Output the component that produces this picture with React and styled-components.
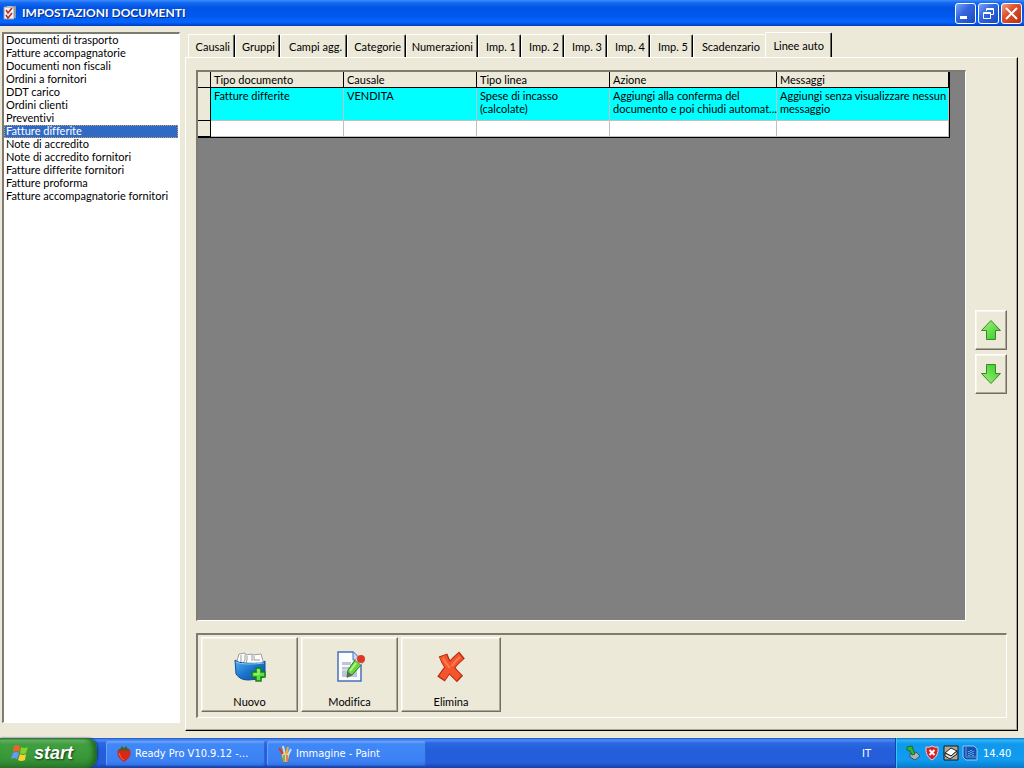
import { useState } from "react";
import styled, { createGlobalStyle, css } from "styled-components";

const documentTypes = [
  "Documenti di trasporto",
  "Fatture accompagnatorie",
  "Documenti non fiscali",
  "Ordini a fornitori",
  "DDT carico",
  "Ordini clienti",
  "Preventivi",
  "Fatture differite",
  "Note di accredito",
  "Note di accredito fornitori",
  "Fatture differite fornitori",
  "Fatture proforma",
  "Fatture accompagnatorie fornitori",
];

const tabs = [
  { label: "Causali", width: 47 },
  { label: "Gruppi", width: 45 },
  { label: "Campi agg.", width: 67 },
  { label: "Categorie", width: 59 },
  { label: "Numerazioni", width: 72 },
  { label: "Imp. 1", width: 43 },
  { label: "Imp. 2", width: 43 },
  { label: "Imp. 3", width: 43 },
  { label: "Imp. 4", width: 43 },
  { label: "Imp. 5", width: 43 },
  { label: "Scadenzario", width: 72 },
  { label: "Linee auto", width: 67 },
];

const columns = [
  { title: "Tipo documento", width: 133 },
  { title: "Causale", width: 133 },
  { title: "Tipo linea", width: 133 },
  { title: "Azione", width: 167 },
  { title: "Messaggi", width: 172 },
];

const rows = [
  [
    "Fatture differite",
    "VENDITA",
    "Spese di incasso\n(calcolate)",
    "Aggiungi alla conferma del\ndocumento e poi chiudi automat...",
    "Aggiungi senza visualizzare nessun\nmessaggio",
  ],
];

const GlobalStyle = createGlobalStyle`
  * {
    box-sizing: border-box;
  }
  body {
    margin: 0;
    background: #ece9d8;
    font-family: Lato, "Liberation Sans", Arial, sans-serif;
    font-size: 11px;
    font-variant-ligatures: none;
    line-height: 13px;
    color: #000;
  }
  button {
    font: inherit;
    font-variant-ligatures: none;
    color: inherit;
    padding: 0;
    margin: 0;
  }
  svg {
    display: block;
    flex: none;
  }
`;

const sunken = css`
  border: solid;
  border-width: 2px 1px 1px 2px;
  border-color: #7e7c70 #fff #fff #7e7c70;
`;

const raised = css`
  background: #ece9d8;
  border: 1px solid;
  border-color: #fff #716f64 #716f64 #fff;
  box-shadow: inset -1px -1px #aca899, inset 1px 1px #f8f6ec;
`;

const Desktop = styled.div`
  display: flex;
  flex-direction: column;
  min-height: 100vh;
`;

const TitleBar = styled.header`
  display: flex;
  align-items: center;
  gap: 5px;
  height: 26px;
  padding: 0 2px 0 3px;
  background: linear-gradient(#3a8cff 0, #1468f0 3px, #0054e3 8px, #0058ee 16px, #0566ff 22px, #0048d0 25px, #0038b8 26px);
`;

const Title = styled.h1`
  flex: 1;
  margin: 0;
  font-size: 12px;
  font-weight: bold;
  line-height: 16px;
  color: #fff;
  text-shadow: 1px 1px #0a2a80;
`;

const WindowButtons = styled.div`
  display: flex;
  gap: 2px;
`;

const WindowButton = styled.button`
  display: grid;
  place-items: center;
  width: 21px;
  height: 21px;
  border: 1px solid #fff;
  border-radius: 3px;
  background: ${(props) =>
    props.$close
      ? "linear-gradient(135deg, #f0a088, #e0502c 40%, #b83010)"
      : "linear-gradient(135deg, #7ca4f4, #3468e0 40%, #1848c0)"};
`;

const Main = styled.main`
  flex: 1;
  display: flex;
  gap: 5px;
  padding: 6px 6px 7px 2px;
`;

const DocumentList = styled.ul`
  ${sunken}
  flex: none;
  width: 178px;
  margin: 0 0 8px;
  padding: 0 1px 0 0;
  list-style: none;
  background: #fff;
`;

const DocumentItem = styled.li`
  height: 13px;
  padding: 0 2px;
  line-height: 11px;
  white-space: nowrap;
  cursor: default;
  ${(props) =>
    props.$selected &&
    css`
      background: #316ac5;
      color: #fff;
      outline: 1px dotted #c8a060;
      outline-offset: -1px;
    `}
`;

const Settings = styled.section`
  flex: 1;
  min-width: 0;
  display: flex;
  flex-direction: column;
`;

const TabStrip = styled.div`
  display: flex;
  align-items: flex-end;
  height: 25px;
  padding-left: 3px;
`;

const Tab = styled.button`
  width: ${(props) => props.$width}px;
  height: 23px;
  border: solid;
  border-width: 1px 1px 0 1px;
  border-color: #fff #000 #fff #fff;
  border-radius: 2px 2px 0 0;
  background: #ece9d8;
  box-shadow: inset -1px 0 #716f64;
  padding: 1px 4px 0 0;
  text-align: right;
  white-space: nowrap;
  ${(props) =>
    props.$beforeActive &&
    css`
      border-right-color: transparent;
      box-shadow: none;
    `}
  ${(props) =>
    props.$active &&
    css`
      height: 26px;
      margin-bottom: -1px;
      padding: 0 7px 1px 0;
    `}
`;

const TabPanel = styled.div`
  flex: 1;
  display: flex;
  flex-direction: column;
  gap: 12px;
  padding: 12px 10px 12px 10px;
  border: 1px solid;
  border-color: #fff #000 #000 #fff;
  box-shadow: inset -1px -1px #aca899;
`;

const GridArea = styled.div`
  flex: 1;
  display: flex;
  gap: 9px;
`;

const GridFrame = styled.div`
  ${sunken}
  flex: 1;
  min-width: 0;
  overflow: hidden;
  background: #808080;
`;

const Grid = styled.table`
  table-layout: fixed;
  width: 752px;
  border-collapse: separate;
  border-spacing: 0;
  border-right: 1px solid #000;
  border-bottom: 1px solid #000;
`;

const HeadCell = styled.th`
  height: 16px;
  padding: 1px 3px 0;
  border-right: 1px solid #000;
  border-bottom: 1px solid #000;
  background: #ece9d8;
  font-weight: normal;
  line-height: 14px;
  text-align: left;
`;

const RowMarker = styled.th`
  padding: 0;
  border-right: 1px solid #000;
  border-bottom: 1px solid #000;
  background: #ece9d8;
`;

const Cell = styled.td`
  height: ${(props) => (props.$filled ? 33 : 16)}px;
  padding: 1px 0 0 3px;
  border-right: 1px solid #c0c0c0;
  border-bottom: 1px solid #c0c0c0;
  background: ${(props) => (props.$filled ? "#0ff" : "#fff")};
  vertical-align: top;
  white-space: pre;
`;

const MoveButtons = styled.div`
  display: flex;
  flex-direction: column;
  justify-content: center;
  gap: 4px;
  padding-top: 12px;
`;

const MoveButton = styled.button`
  ${raised}
  display: grid;
  place-items: center;
  width: 32px;
  height: 40px;
`;

const ActionBar = styled.div`
  ${sunken}
  display: flex;
  gap: 3px;
  height: 85px;
  padding: 2px 3px;
`;

const ActionButton = styled.button`
  ${raised}
  display: flex;
  flex-direction: column;
  align-items: center;
  justify-content: space-between;
  width: ${(props) => (props.$last ? 100 : 97)}px;
  height: 75px;
  padding: 12px 0 3px;
`;

const Taskbar = styled.footer`
  display: flex;
  align-items: stretch;
  height: 30px;
  background: linear-gradient(#1c50c0 0, #4c90f4 2px, #2c68e4 5px, #245edb 12px, #245edb 25px, #1840a8 30px);
  color: #fff;
  font-family: "DejaVu Sans Condensed", "DejaVu Sans", sans-serif;
`;

const StartButton = styled.button`
  display: flex;
  align-items: center;
  gap: 4px;
  width: 97px;
  padding-left: 10px;
  border: 0;
  border-radius: 0 10px 10px 0;
  background: linear-gradient(#2c7a2c 0, #70b870 2px, #40a040 6px, #389838 20px, #2c7c2c 30px);
  box-shadow: inset -4px 0 5px #206820, 1px 0 2px #10389c;
  font-family: "Liberation Sans", Arial, sans-serif;
  font-size: 18px;
  font-weight: bold;
  font-style: italic;
  line-height: 20px;
  text-shadow: 1px 1px 2px #103810;
`;

const Tasks = styled.nav`
  flex: 1;
  display: flex;
  gap: 2px;
  padding: 3px 0 2px 9px;
`;

const Task = styled.button`
  display: flex;
  align-items: center;
  gap: 3px;
  width: 159px;
  padding-left: 10px;
  border: 0;
  border-radius: 3px;
  background: linear-gradient(#70a8ff 0, #4088f8 3px, #3c81f3 20px, #3070e0 25px);
  box-shadow: inset 1px 1px #6ca0f8, inset -1px -1px #2c64d0;
  white-space: nowrap;
`;

const Language = styled.span`
  align-self: center;
  padding: 0 24px;
`;

const Tray = styled.div`
  display: flex;
  align-items: center;
  gap: 3px;
  width: 129px;
  padding-left: 9px;
  border-left: 1px solid #0c48a0;
  background: linear-gradient(#0c6cc0 0, #30b4f8 2px, #1098ec 6px, #109cf0 22px, #0c78c8 30px);
  box-shadow: inset 1px 0 #40c0ff;
`;

const Clock = styled.time`
  margin-left: 2px;
`;

function ChecklistIcon() {
  return (
    <svg width="14" height="16" viewBox="0 0 14 16">
      <path d="M4 1h9v12H4z" fill="#8c98a0" />
      <path d="M1 2h10v12H1z" fill="#f4f4f0" stroke="#90a0a4" />
      <path d="M4 1h5v2H4z" fill="#b8c4c8" />
      <path d="M3 5l2 3 4-5M3 10l2 3 4-5" fill="none" stroke="#c02028" strokeWidth="1.5" />
    </svg>
  );
}

function BoxIcon() {
  return (
    <svg width="34" height="34" viewBox="0 0 34 34">
      <defs>
        <linearGradient id="box" x2="1" y2="1">
          <stop stopColor="#58b0f0" />
          <stop offset=".5" stopColor="#1c74cc" />
          <stop offset="1" stopColor="#0c4ca0" />
        </linearGradient>
      </defs>
      <path d="M4 11l2-7 6-1 1 2 6-1 1 1 8-1 2 7v4H4z" fill="#fff" stroke="#9c9c98" />
      <path d="M8 5v7l-2 1M12 5v5l-2 3M14 6v4l-1 3M19 5v6M21 6v4h6" fill="none" stroke="#999" />
      <path d="M2 10l3 2q8 2 24 1l3-2v15l-5 3-12 1q-8 0-12-6z" fill="url(#box)" stroke="#0c5098" />
      <path d="M3 12q3 2 12 2 9 0 16-1" fill="none" stroke="#80c8f8" />
      <path d="M23 18h5v4h4v5h-4v4h-5v-4h-4v-5h4z" fill="#64e044" stroke="#14801c" strokeWidth="1.5" />
      <path d="M24 20h2v4h-5" fill="none" stroke="#b4ff90" />
    </svg>
  );
}

function EditIcon() {
  return (
    <svg width="34" height="34" viewBox="0 0 34 34">
      <path d="M5 2h15l8 8v21H5z" fill="#fbfdff" stroke="#4870b8" strokeWidth="1.5" />
      <path d="M20 2v8h8" fill="#c8dcf8" stroke="#4870b8" />
      <path d="M9 12h9v3H9zM9 17h15v10H9z" fill="#bcc4d8" />
      <path d="M9 16h14M9 20h14" stroke="#eef2fa" />
      <path d="M22 10l6 5-9 10-5 2 1-7z" fill="#68d83c" stroke="#287818" />
      <path d="M23 13l-6 8" stroke="#b4f48c" strokeWidth="2" />
      <path d="M15 22l4 3-5 3z" fill="#606468" />
      <path d="M22 10l3-4 6 5-3 4z" fill="#dce0e4" stroke="#888" strokeWidth=".5" />
      <circle cx="28" cy="9" r="4" fill="#e03828" />
    </svg>
  );
}

function DeleteIcon() {
  return (
    <svg width="34" height="34" viewBox="0 0 34 34" fill="none">
      <path d="M9 5q4 12 17 24M28 5Q17 14 7 29" stroke="#b82c14" strokeWidth="9" />
      <path d="M9 6q4 11 16 22M27 6Q17 14 8 28" stroke="#f4552c" strokeWidth="7" />
      <path d="M9 8q3 6 7 10M26 7q-5 4-8 9" stroke="#ff7c50" strokeWidth="2" />
    </svg>
  );
}

function ArrowIcon({ down }) {
  return (
    <svg width="22" height="22" viewBox="0 0 22 22">
      <defs>
        <linearGradient id="arrow" x2="1" y2="1">
          <stop stopColor="#a8f480" />
          <stop offset="1" stopColor="#30c820" />
        </linearGradient>
      </defs>
      <path
        d="M11 1.500L20.500 11.500H15.500V20.500H6.500V11.500H1.500z"
        fill="url(#arrow)"
        stroke="#38882c"
        transform={down ? "matrix(1 0 0 -1 0 22)" : undefined}
      />
    </svg>
  );
}

function FlagIcon() {
  return (
    <svg width="20" height="20" viewBox="0 0 20 20">
      <path d="M4 3q3-2 6 0L9 9Q6 7 3 9z" fill="#f06030" />
      <path d="M11 4q3 2 7 0l-2 6q-3 2-6 0z" fill="#88d030" />
      <path d="M3 10q3-2 6 0l-2 6q-3-2-6 0z" fill="#6898f8" />
      <path d="M10 11q3 2 6 0l-1 6q-4 2-7 0z" fill="#fcd030" />
    </svg>
  );
}

function StrawberryIcon() {
  return (
    <svg width="16" height="18" viewBox="0 0 16 18">
      <path d="M2 5q6-3 12 0 2 4-2 9l-4 3-4-3Q0 9 2 5z" fill="#d42818" />
      <path d="M3 8q1 5 5 7" fill="none" stroke="#f06848" />
      <path d="M2 5l3-2 1-2 2 2 3-2v2l3 2-3 1-3-1-3 1z" fill="#4c5c24" />
    </svg>
  );
}

function PaintIcon() {
  return (
    <svg width="16" height="18" viewBox="0 0 16 18">
      <path d="M4 8h9l-2 9H6z" fill="#e4d8a8" stroke="#806840" strokeWidth=".7" />
      <path d="M6 9L2 3" stroke="#d83828" strokeWidth="2" />
      <path d="M8 10L6 1" stroke="#f0d8a0" strokeWidth="2" />
      <path d="M9 10l2-8" stroke="#e8b040" strokeWidth="2" />
      <path d="M11 10l3-6" stroke="#c8e0f0" strokeWidth="2" />
      <path d="M7 10v6" stroke="#50a840" strokeWidth="1.5" />
      <path d="M10 10v6" stroke="#e06040" strokeWidth="1.5" />
    </svg>
  );
}

function TrayIcons() {
  return (
    <>
      <svg width="16" height="16" viewBox="0 0 16 16">
        <path d="M5 9l6-2 4 4-5 4-5-3z" fill="#a8b4b8" stroke="#405058" />
        <path d="M2 2l5-1 1 3 2 5-3 1-2-4-3-1z" fill="#38b038" stroke="#14702c" />
      </svg>
      <svg width="16" height="16" viewBox="0 0 16 16">
        <path d="M8 1q3 2 6 1 1 9-6 13Q1 11 2 2q3 1 6-1z" fill="#d82028" stroke="#e8d0d0" />
        <path d="M5.500 5l5 5M10.500 5l-5 5" stroke="#fff" strokeWidth="2" />
      </svg>
      <svg width="16" height="16" viewBox="0 0 16 16">
        <path d="M1 1h14v14H1z" fill="#a8a89c" stroke="#101820" />
        <path d="M2 8l6-5 6 3-6 5z" fill="#fff" stroke="#202020" />
        <path d="M2 8v3l5 3 7-5V6l-6 5z" fill="#e0e0d8" stroke="#202020" />
      </svg>
      <svg width="16" height="16" viewBox="0 0 16 16">
        <path d="M1 1h11l3 3v11H4l-3-3z" fill="#1454b0" stroke="#90c8f8" />
        <path d="M4 2v10h11" fill="none" stroke="#5c98dc" />
        <path d="M7 6v5M9 5v6M11 6v5" stroke="#b8dcff" strokeDasharray="1 1" />
      </svg>
    </>
  );
}

export default function App() {
  const [selected, setSelected] = useState("Fatture differite");
  const [tab, setTab] = useState("Linee auto");
  const activeIndex = tabs.findIndex((item) => item.label === tab);

  return (
    <Desktop>
      <GlobalStyle />
      <TitleBar>
        <ChecklistIcon />
        <Title>IMPOSTAZIONI DOCUMENTI</Title>
        <WindowButtons>
          <WindowButton aria-label="Riduci a icona">
            <svg width="15" height="15" viewBox="0 0 15 15">
              <path d="M2 10h7v3H2z" fill="#fff" />
            </svg>
          </WindowButton>
          <WindowButton aria-label="Ripristina">
            <svg width="15" height="15" viewBox="0 0 15 15" fill="none" stroke="#fff">
              <path d="M5.500 5V2.500h7v6H10M5 3.500h8M2.500 6.500h7v6h-7zM2 7.500h8" />
            </svg>
          </WindowButton>
          <WindowButton $close aria-label="Chiudi">
            <svg width="15" height="15" viewBox="0 0 15 15">
              <path d="M2 2l11 11M13 2L2 13" stroke="#fff" strokeWidth="2" />
            </svg>
          </WindowButton>
        </WindowButtons>
      </TitleBar>

      <Main>
        <DocumentList role="listbox" aria-label="Documenti">
          {documentTypes.map((name) => (
            <DocumentItem
              key={name}
              role="option"
              aria-selected={name === selected}
              $selected={name === selected}
              onClick={() => setSelected(name)}
            >
              {name}
            </DocumentItem>
          ))}
        </DocumentList>

        <Settings>
          <TabStrip role="tablist">
            {tabs.map((item, index) => (
              <Tab
                key={item.label}
                role="tab"
                aria-selected={index === activeIndex}
                $width={item.width}
                $active={index === activeIndex}
                $beforeActive={index === activeIndex - 1}
                onClick={() => setTab(item.label)}
              >
                {item.label}
              </Tab>
            ))}
          </TabStrip>
          <TabPanel role="tabpanel">
            <GridArea>
              <GridFrame>
                <Grid>
                  <colgroup>
                    <col width="13" />
                    {columns.map((column) => (
                      <col key={column.title} width={column.width} />
                    ))}
                  </colgroup>
                  <thead>
                    <tr>
                      <RowMarker />
                      {columns.map((column) => (
                        <HeadCell key={column.title}>{column.title}</HeadCell>
                      ))}
                    </tr>
                  </thead>
                  <tbody>
                    {rows.map((row) => (
                      <tr key={row[0]}>
                        <RowMarker />
                        {row.map((text) => (
                          <Cell key={text} $filled>
                            {text}
                          </Cell>
                        ))}
                      </tr>
                    ))}
                    <tr>
                      <RowMarker />
                      {columns.map((column) => (
                        <Cell key={column.title} />
                      ))}
                    </tr>
                  </tbody>
                </Grid>
              </GridFrame>
              <MoveButtons>
                <MoveButton aria-label="Sposta su">
                  <ArrowIcon />
                </MoveButton>
                <MoveButton aria-label="Sposta giù">
                  <ArrowIcon down />
                </MoveButton>
              </MoveButtons>
            </GridArea>
            <ActionBar>
              <ActionButton>
                <BoxIcon />
                Nuovo
              </ActionButton>
              <ActionButton>
                <EditIcon />
                Modifica
              </ActionButton>
              <ActionButton $last>
                <DeleteIcon />
                Elimina
              </ActionButton>
            </ActionBar>
          </TabPanel>
        </Settings>
      </Main>

      <Taskbar>
        <StartButton>
          <FlagIcon />
          start
        </StartButton>
        <Tasks>
          <Task>
            <StrawberryIcon />
            Ready Pro V10.9.12 -...
          </Task>
          <Task>
            <PaintIcon />
            Immagine - Paint
          </Task>
        </Tasks>
        <Language>IT</Language>
        <Tray>
          <TrayIcons />
          <Clock>14.40</Clock>
        </Tray>
      </Taskbar>
    </Desktop>
  );
}
